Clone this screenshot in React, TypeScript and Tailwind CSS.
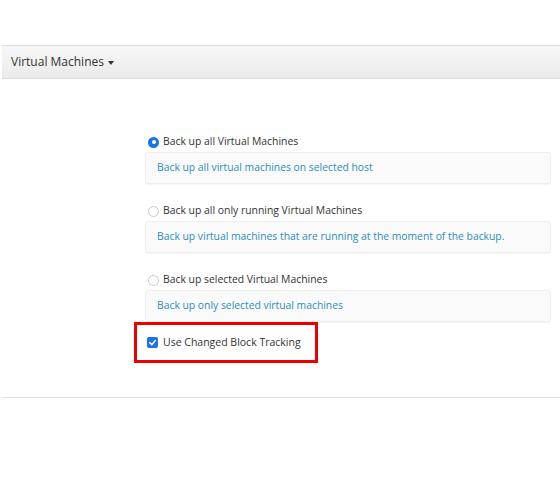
import { useState } from 'react'

type Option = { id: string; label: string; hint: string }

const OPTIONS: Option[] = [
  { id: 'all', label: 'Back up all Virtual Machines', hint: 'Back up all virtual machines on selected host' },
  {
    id: 'running',
    label: 'Back up all only running Virtual Machines',
    hint: 'Back up virtual machines that are running at the moment of the backup.',
  },
  { id: 'selected', label: 'Back up selected Virtual Machines', hint: 'Back up only selected virtual machines' },
]

export default function App() {
  const [mode, setMode] = useState('all')
  const [cbt, setCbt] = useState(true)

  return (
    <div className="w-[560px] h-[480px] bg-white pt-[45px] pl-[2px] font-['Open_Sans',sans-serif] text-[#333]">
      {/* section header */}
      <div className="h-[34px] flex items-center pl-[9px] border-y border-[#dcdcdc] bg-gradient-to-b from-[#f7f7f7] to-[#ebebeb]">
        <span className="text-[12px]">Virtual Machines</span>
        <span className="ml-[4px] mt-[2px] w-0 h-0 border-x-[3.5px] border-x-transparent border-t-[4px] border-t-[#333]" />
      </div>

      <div className="ml-[143px] mr-[9px] pt-[55px] pb-[34px]">
        {OPTIONS.map((o) => (
          <div key={o.id} className="mb-[19px]">
            <label className="flex items-center h-[16px] pl-[3px] mb-[2px] text-[10.4px] cursor-pointer">
              {mode === o.id ? (
                <span className="w-[11px] h-[11px] rounded-full bg-[#1a73e8] flex items-center justify-center">
                  <span className="w-[4px] h-[4px] rounded-full bg-white" />
                </span>
              ) : (
                <span
                  className="w-[11px] h-[11px] rounded-full border border-[#c8c8c8] bg-white"
                  onClick={() => setMode(o.id)}
                />
              )}
              <span className="ml-[4px]">{o.label}</span>
            </label>
            <div className="h-[32px] flex items-center pl-[11px] rounded-[3px] border border-[#eeeeee] bg-[#fafafa] shadow-[0_1px_1px_rgba(0,0,0,0.04)] text-[10.35px] text-[#2b8dbb]">
              {o.hint}
            </div>
          </div>
        ))}

        <div className="-mt-[19px] -ml-[11px] w-[184px] h-[41px] border-[3px] border-[#ee0000] flex items-center pl-[10px]">
          <button
            onClick={() => setCbt(!cbt)}
            className={`w-[11px] h-[11px] rounded-[2px] flex items-center justify-center ${cbt ? 'bg-[#1a73e8]' : 'border border-[#c8c8c8] bg-white'}`}
          >
            {cbt && (
              <svg width="9" height="9" viewBox="0 0 10 10">
                <path d="M2 5.2 L4.2 7.4 L8.2 2.8" stroke="white" strokeWidth="1.7" fill="none" strokeLinecap="round" strokeLinejoin="round" />
              </svg>
            )}
          </button>
          <span className="ml-[5px] text-[10.5px]">Use Changed Block Tracking</span>
        </div>
      </div>

      <div className="border-t border-[#e2e2e2]" />
    </div>
  )
}
